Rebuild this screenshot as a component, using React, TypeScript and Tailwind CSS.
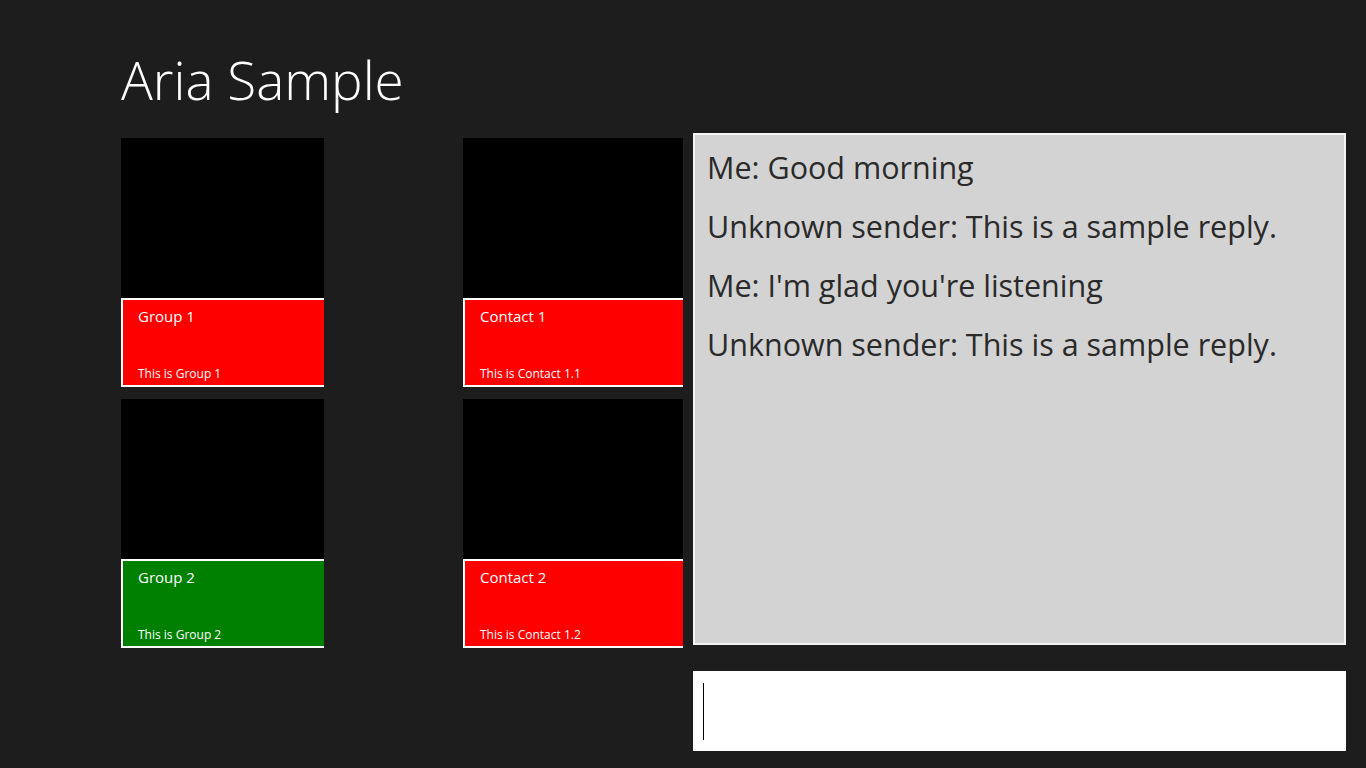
const tiles = [
  { title: "Group 1", sub: "This is Group 1", color: "bg-[#ff0000]" },
  { title: "Contact 1", sub: "This is Contact 1.1", color: "bg-[#ff0000]" },
  { title: "Group 2", sub: "This is Group 2", color: "bg-[#008000]" },
  { title: "Contact 2", sub: "This is Contact 1.2", color: "bg-[#ff0000]" },
]

const messages = [
  "Me: Good morning",
  "Unknown sender: This is a sample reply.",
  "Me: I'm glad you're listening",
  "Unknown sender: This is a sample reply.",
]

function Tile({ title, sub, color }: { title: string; sub: string; color: string }) {
  return (
    <div className="flex h-[249px] flex-col">
      <div className="h-[160px] bg-black" />
      <div className={`flex h-[89px] flex-col justify-between border-2 border-r-0 border-white pb-[3px] pl-[15px] pt-[6px] text-white ${color}`}>
        <div className="text-[15px] leading-[20px]">{title}</div>
        <div className="text-[12px] leading-[16px]">{sub}</div>
      </div>
    </div>
  )
}

export default function App() {
  return (
    <div
      className="h-[768px] w-[1366px] overflow-hidden bg-[#1d1d1d]"
      style={{ fontFamily: '"Open Sans", "Noto Sans", sans-serif' }}
    >
      <h1 className="pl-[121px] pt-[42px] text-[53px] font-light leading-[75px] text-white">Aria Sample</h1>
      <div className="mt-[16px] flex pl-[121px]">
        <div className="mt-[5px] grid grid-cols-[203px_220px] gap-x-[139px] gap-y-[12px] self-start">
          {tiles.map((t) => (
            <Tile key={t.title} {...t} />
          ))}
        </div>
        <div className="ml-[10px] flex w-[653px] flex-col">
          <div className="flex h-[512px] flex-col gap-[19px] border-2 border-[#f4f4f4] bg-[#d3d3d3] px-[12px] pt-[12px] text-[30.5px] leading-[40px] text-[#2a2a2a]">
            {messages.map((m, i) => (
              <div key={i}>{m}</div>
            ))}
          </div>
          <div className="mt-[26px] flex h-[80px] items-center bg-white pl-[10px]">
            <div className="h-[57px] w-px bg-black" />
          </div>
        </div>
      </div>
    </div>
  )
}
